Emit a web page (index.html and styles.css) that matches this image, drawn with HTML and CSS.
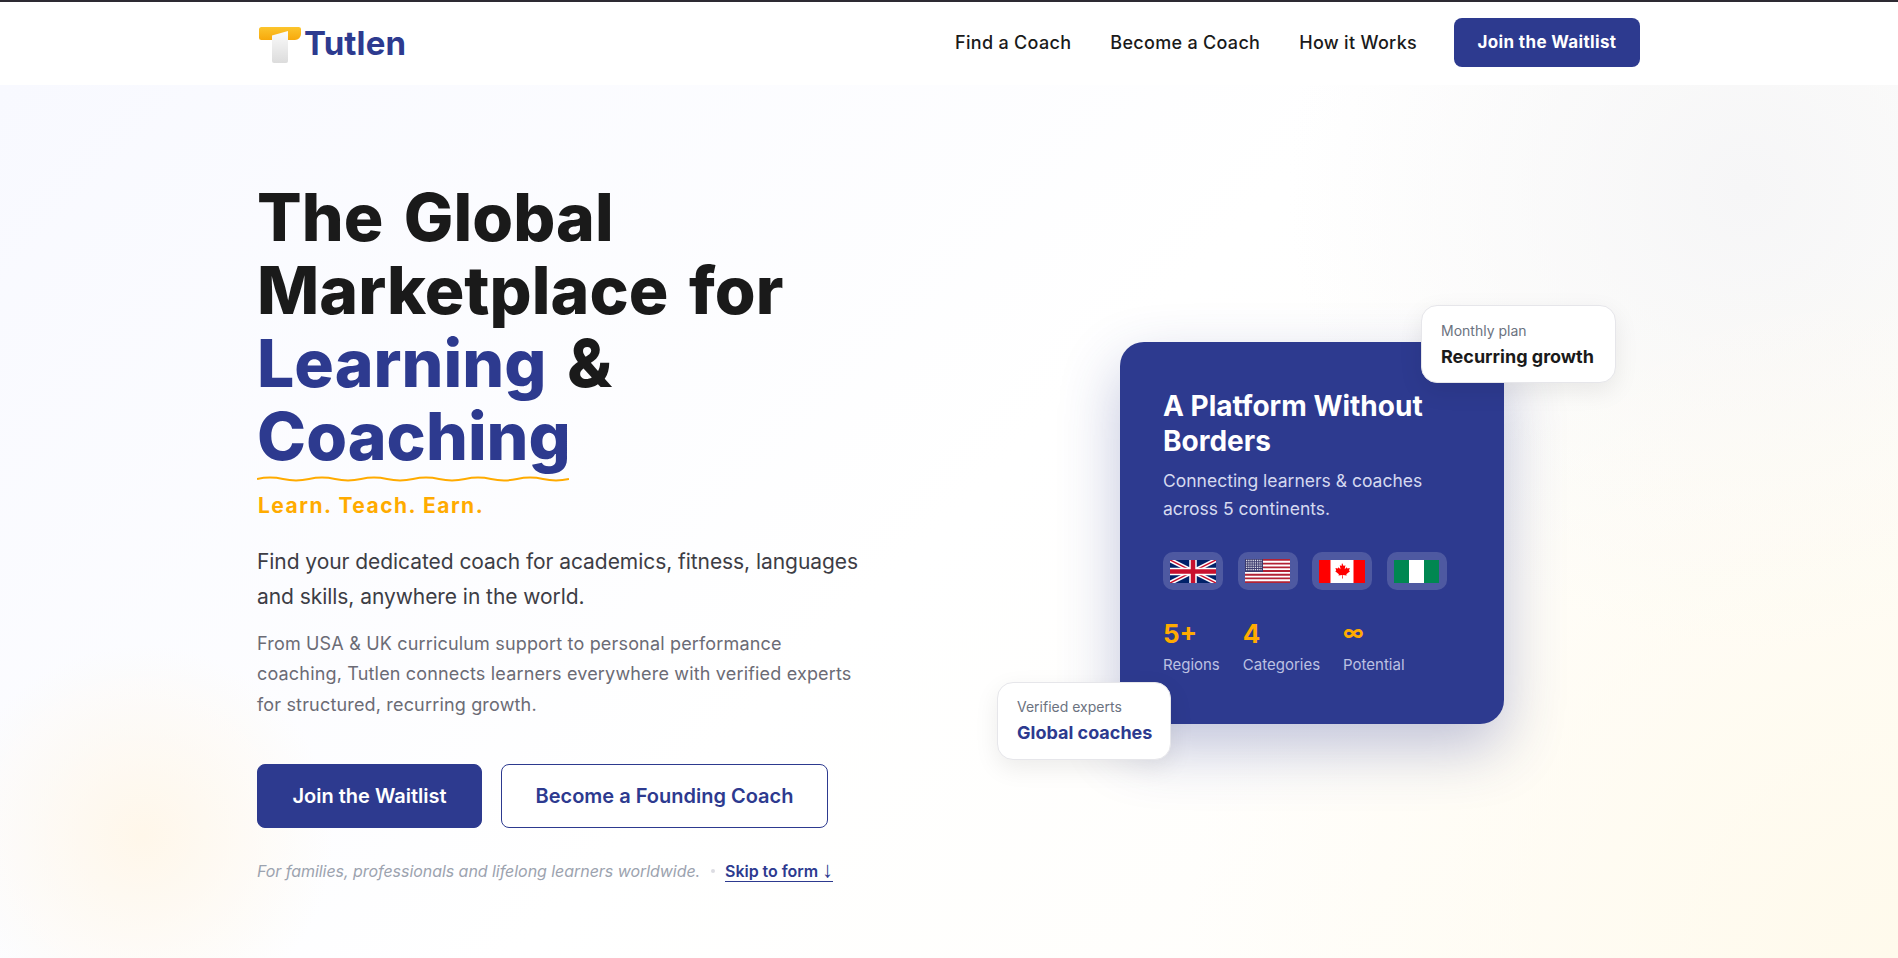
FILE: index.html
```html
<!DOCTYPE html>
<html lang="en">
<head>
    <meta charset="UTF-8">
    <meta name="viewport" content="width=device-width, initial-scale=1.0">
    <title>Tutlen</title>
    <link rel="stylesheet" href="styles.css">
</head>
<body>
    <header class="navbar">
        <div class="nav-inner">
            <a class="logo" href="#">
                <svg class="logo-mark" viewBox="0 0 44 38" width="44" height="38">
                    <defs>
                        <linearGradient id="bar" x1="0" y1="0" x2="0" y2="1">
                            <stop offset="0" stop-color="#fcc52c"/>
                            <stop offset="1" stop-color="#f7a90c"/>
                        </linearGradient>
                        <linearGradient id="stem" x1="0" y1="0" x2="0" y2="1">
                            <stop offset="0" stop-color="#fbfbfb"/>
                            <stop offset="1" stop-color="#dcdcdc"/>
                        </linearGradient>
                    </defs>
                    <path d="M2.500 0h37a2.500 2.500 0 0 1 2.500 2.500V7a6 6 0 0 1-6 6H2.500A2.500 2.500 0 0 1 0 10.500v-8A2.500 2.500 0 0 1 2.500 0z" fill="url(#bar)"/>
                    <path d="M13 8.500L29 4v30a2 2 0 0 1-2 2H15a2 2 0 0 1-2-2z" fill="url(#stem)"/>
                </svg>
                <span class="logo-text">Tutlen</span>
            </a>
            <nav class="nav-links">
                <a href="#">Find a Coach</a>
                <a href="#">Become a Coach</a>
                <a href="#">How it Works</a>
                <a class="nav-btn" href="#">Join the Waitlist</a>
            </nav>
        </div>
    </header>

    <section class="hero">
        <div class="hero-inner">
            <div class="hero-left">
                <h1>The Global Marketplace for <span class="blue">Learning</span> &amp; <span class="blue wavy">Coaching<svg class="wave" viewBox="0 0 312 6" preserveAspectRatio="none"><path d="M0 3c9-2 17-2 26 0s17 2 26 0 17-2 26 0 17 2 26 0 17-2 26 0 17 2 26 0 17-2 26 0 17 2 26 0 17-2 26 0 17 2 26 0 17-2 26 0 17 2 26 0" fill="none" stroke="#ffab00" stroke-width="2"/></svg></span></h1>
                <p class="tagline">Learn. Teach. Earn.</p>
                <p class="lead">Find your dedicated coach for academics, fitness, languages and skills, anywhere in the world.</p>
                <p class="sub">From USA &amp; UK curriculum support to personal performance coaching, Tutlen connects learners everywhere with verified experts for structured, recurring growth.</p>
                <div class="hero-btns">
                    <a class="btn btn-main" href="#">Join the Waitlist</a>
                    <a class="btn btn-outline" href="#">Become a Founding Coach</a>
                </div>
                <div class="hero-note">
                    <em>For families, professionals and lifelong learners worldwide.</em>
                    <span class="dot"></span>
                    <a href="#">Skip to form <span class="arrow">↓</span></a>
                </div>
            </div>
            <div class="hero-right">
                <div class="card-wrap">
                    <div class="card">
                        <h2>A Platform Without Borders</h2>
                        <p>Connecting learners &amp; coaches across 5 continents.</p>
                        <div class="flags">
                            <div class="flag-box">
                                <svg viewBox="0 0 46 23" width="46" height="23">
                                    <rect width="46" height="23" fill="#012169"/>
                                    <path d="M0 0l46 23M46 0L0 23" stroke="#fff" stroke-width="4.500"/>
                                    <path d="M0 0l46 23M46 0L0 23" stroke="#c8102e" stroke-width="1.500"/>
                                    <path d="M23 0v23M0 11.500h46" stroke="#fff" stroke-width="7.500"/>
                                    <path d="M23 0v23M0 11.500h46" stroke="#c8102e" stroke-width="4.500"/>
                                </svg>
                            </div>
                            <div class="flag-box">
                                <svg viewBox="0 0 45 24" width="45" height="24">
                                    <rect width="45" height="24" fill="#fff"/>
                                    <path d="M0 .9h45M0 4.600h45M0 8.300h45M0 12h45M0 15.700h45M0 19.400h45M0 23.100h45" stroke="#b22234" stroke-width="1.850"/>
                                    <rect width="18" height="13" fill="#3c3b6e"/>
                                    <path d="M1 1.500h16M1 3.800h16M1 6.100h16M1 8.400h16M1 10.700h16" stroke="#dfe0ea" stroke-width="1.300" stroke-dasharray="1.300 .9"/>
                                </svg>
                            </div>
                            <div class="flag-box">
                                <svg viewBox="0 0 46 23" width="46" height="23">
                                    <rect width="46" height="23" fill="#fff"/>
                                    <rect width="11.500" height="23" fill="#f00"/>
                                    <rect x="34.500" width="11.500" height="23" fill="#f00"/>
                                    <path d="M23 3l1.700 3.100 1.700-.9-.7 4 2.100-2 .5 1.300 2.500-.4-.8 2.500 1 .6-3.700 3 .4 1.300-3.800-.5.100 3.500h-.800l.1-3.500-3.800.5.4-1.300-3.700-3 1-.6-.8-2.500 2.500.4.500-1.300 2.100 2-.7-4 1.700.9z" fill="#f00"/>
                                </svg>
                            </div>
                            <div class="flag-box">
                                <svg viewBox="0 0 45 23" width="45" height="23">
                                    <rect width="45" height="23" fill="#fff"/>
                                    <rect width="15" height="23" fill="#008751"/>
                                    <rect x="30" width="15" height="23" fill="#008751"/>
                                </svg>
                            </div>
                        </div>
                        <div class="stats">
                            <div class="stat"><strong>5+</strong><span>Regions</span></div>
                            <div class="stat"><strong>4</strong><span>Categories</span></div>
                            <div class="stat"><strong class="infinity">∞</strong><span>Potential</span></div>
                        </div>
                    </div>
                    <div class="float float-top">
                        <span>Monthly plan</span>
                        <strong>Recurring growth</strong>
                    </div>
                    <div class="float float-bottom">
                        <span>Verified experts</span>
                        <strong>Global coaches</strong>
                    </div>
                </div>
            </div>
        </div>
    </section>
</body>
</html>
```

FILE: styles.css
```css
*{
    box-sizing: border-box;
}
body{
    margin: 0;
    font-family: Inter, "Noto Sans", sans-serif;
    color: #1a1a1a;
    background: #fff;
}
a{
    text-decoration: none;
    color: inherit;
}
.navbar{
    height: 85px;
    padding-bottom: 2px;
    background: #fff;
    border-top: 2px solid #2d2a33;
}
.nav-inner{
    width: 1382px;
    height: 81px;
    margin: 0 auto;
    display: flex;
    align-items: center;
    justify-content: space-between;
}
.logo{
    display: flex;
    align-items: center;
    gap: 1px;
    margin-left: 1px;
}
.logo-mark{
    margin-top: 6px;
}
.logo-text{
    font-size: 33px;
    font-weight: 700;
    color: #2d3a8f;
    letter-spacing: .1px;
}
.nav-links{
    display: flex;
    align-items: center;
    gap: 39px;
    font-size: 18px;
    font-weight: 500;
    letter-spacing: .3px;
}
.nav-btn{
    width: 186px;
    height: 49px;
    margin-left: -2px;
    line-height: 49px;
    text-align: center;
    background: #2d3a8f;
    color: #fff;
    font-weight: 700;
    font-size: 17px;
    letter-spacing: .35px;
    border-radius: 8px;
}
.hero{
    height: 873px;
    background:
        radial-gradient(circle at 7.500% 86%, #fff7ea 0, rgba(255,247,234,0) 10%),
        radial-gradient(circle at 100% 100%, #fffaec 0, rgba(255,250,236,0) 34%),
        radial-gradient(circle at 92% 12%, #f6f6f7 0, rgba(246,246,247,0) 24%),
        linear-gradient(135deg, #f8f9ff 0%, #fff 50%, #fffdf8 100%);
}
.hero-inner{
    width: 1382px;
    margin: 0 auto;
    display: grid;
    grid-template-columns: 700px 1fr;
}
.hero-left{
    padding-top: 96px;
    margin-left: -1px;
}
h1{
    margin: 0;
    width: 600px;
    font-size: 66px;
    line-height: 73px;
    font-weight: 800;
    letter-spacing: .05px;
    word-spacing: 6px;
    color: #1a1a1a;
}
.blue{
    color: #2d3a8f;
}
.wavy{
    position: relative;
    display: inline-block;
}
.wave{
    position: absolute;
    left: 0;
    bottom: -9px;
    width: 312px;
    height: 6px;
}
.tagline{
    margin: 18px 0 0 1px;
    font-size: 21px;
    line-height: 30px;
    font-weight: 700;
    letter-spacing: 1.500px;
    color: #ffab00;
}
.lead{
    margin: 23px 0 0;
    width: 620px;
    font-size: 21px;
    line-height: 35px;
    letter-spacing: -.06px;
    color: #3d3d45;
}
.sub{
    margin: 14.500px 0 0;
    width: 600px;
    font-size: 18px;
    line-height: 30.500px;
    letter-spacing: .17px;
    color: #6b6b75;
}
.hero-btns{
    display: flex;
    gap: 19px;
    margin-top: 43.500px;
}
.btn{
    height: 64px;
    line-height: 62px;
    text-align: center;
    font-size: 20px;
    font-weight: 600;
    border-radius: 8px;
    border: 1px solid #2d3a8f;
}
.btn-main{
    width: 225px;
    background: #2d3a8f;
    color: #fff;
}
.btn-outline{
    width: 327px;
    background: #fff;
    color: #2d3a8f;
}
.hero-note{
    display: flex;
    align-items: center;
    height: 20px;
    margin-top: 33px;
    font-size: 16px;
    letter-spacing: -.05px;
    color: #9ca3af;
}
.dot{
    width: 4px;
    height: 4px;
    border-radius: 50%;
    background: #dcdce2;
    margin: 0 10.500px;
}
.hero-note a{
    color: #2d3a8f;
    font-weight: 600;
    border-bottom: 1px solid #2d3a8f;
}
.arrow{
    font-family: "Liberation Sans", sans-serif;
    font-size: 22px;
    line-height: 1;
    font-weight: 400;
}
.hero-right{
    padding: 257px 0 0 162px;
}
.card-wrap{
    position: relative;
    width: 384px;
}
.card{
    width: 384px;
    height: 382px;
    padding: 47px 43px;
    background: #2d3a8f;
    border-radius: 24px;
    color: #fff;
    box-shadow: 0 24px 60px rgba(45,58,143,.3);
}
.card h2{
    margin: 0;
    font-size: 28px;
    line-height: 35px;
    font-weight: 700;
    width: 280px;
}
.card p{
    margin: 8px 0 0;
    font-size: 17.500px;
    line-height: 28px;
    color: #d5d9f0;
    width: 280px;
}
.flags{
    display: flex;
    gap: 14.500px;
    margin-top: 29px;
}
.flag-box{
    width: 60px;
    height: 38px;
    border-radius: 10px;
    background: rgba(255,255,255,.16);
    display: flex;
    align-items: center;
    justify-content: center;
}
.flag-box svg{
    display: block;
}
.stats{
    display: flex;
    gap: 23px;
    margin-top: 27.500px;
}
.stat strong{
    display: block;
    font-size: 26px;
    line-height: 32px;
    font-weight: 700;
    color: #ffab00;
}
.stat strong.infinity{
    font-size: 21px;
    line-height: 29px;
    padding-bottom: 3px;
}
.stat span{
    display: block;
    margin-top: 6px;
    font-size: 15px;
    line-height: 18px;
    color: #bcc1e2;
}
.float{
    position: absolute;
    height: 78px;
    background: #fff;
    border: 1px solid #e6e6ea;
    border-radius: 16px;
    padding: 15px 19px;
    box-shadow: 0 8px 24px rgba(0,0,0,.08);
}
.float span{
    display: block;
    font-size: 14px;
    line-height: 20px;
    color: #6b7280;
}
.float strong{
    display: block;
    margin-top: 5px;
    font-size: 18px;
    line-height: 22px;
    font-weight: 700;
    white-space: nowrap;
}
.float-top{
    top: -37px;
    left: 301px;
    width: 195px;
}
.float-bottom{
    left: -123px;
    bottom: -36px;
    width: 174px;
    padding-top: 14px;
}
.float-bottom strong{
    color: #2d3a8f;
}
```
